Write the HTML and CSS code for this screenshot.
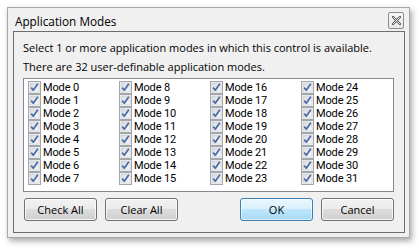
FILE: index.html
```html
<!DOCTYPE html>
<html>
<head>
<meta charset="utf-8">
<link rel="stylesheet" href="styles.css">
</head>
<body>
<svg class="defs" width="0" height="0">
  <defs>
    <linearGradient id="cbg" x1="0" y1="0" x2="1" y2="1">
      <stop offset="0" stop-color="#d6d9de"/>
      <stop offset="1" stop-color="#fbfbfb"/>
    </linearGradient>
    <symbol id="chk" viewBox="0 0 13 13">
      <rect x="0.5" y="0.5" width="12" height="12" fill="#f6f6f6" stroke="#a3a6ab"/>
      <rect x="2" y="2" width="9" height="9" fill="url(#cbg)" stroke="#c4c7cc" stroke-width="0.6"/>
      <path d="M3.2 6.6 L5.3 9.2 L9.8 2.8" fill="none" stroke="#4a6aa6" stroke-width="1.7" stroke-linejoin="round"/>
    </symbol>
  </defs>
</svg>
<div class="window">
  <div class="titlebar">
    <span class="title">Application Modes</span>
    <span class="close">
      <svg width="9" height="9" viewBox="0 0 9 9"><path d="M1 1 L8 8 M8 1 L1 8" stroke="#5a5a5a" stroke-width="2.2" stroke-linecap="square"/><path d="M1 1 L8 8 M8 1 L1 8" stroke="#fbfbfb" stroke-width="0.8"/></svg>
    </span>
  </div>
  <div class="frame">
    <p class="line">Select 1 or more application modes in which this control is available.</p>
    <p class="line">There are 32 user-definable application modes.</p>
    <div class="listbox">
      <div class="grid">
        <label class="item"><svg class="cb"><use href="#chk"/></svg><span>Mode 0</span></label>
        <label class="item"><svg class="cb"><use href="#chk"/></svg><span>Mode 1</span></label>
        <label class="item"><svg class="cb"><use href="#chk"/></svg><span>Mode 2</span></label>
        <label class="item"><svg class="cb"><use href="#chk"/></svg><span>Mode 3</span></label>
        <label class="item"><svg class="cb"><use href="#chk"/></svg><span>Mode 4</span></label>
        <label class="item"><svg class="cb"><use href="#chk"/></svg><span>Mode 5</span></label>
        <label class="item"><svg class="cb"><use href="#chk"/></svg><span>Mode 6</span></label>
        <label class="item"><svg class="cb"><use href="#chk"/></svg><span>Mode 7</span></label>
        <label class="item"><svg class="cb"><use href="#chk"/></svg><span>Mode 8</span></label>
        <label class="item"><svg class="cb"><use href="#chk"/></svg><span>Mode 9</span></label>
        <label class="item"><svg class="cb"><use href="#chk"/></svg><span>Mode 10</span></label>
        <label class="item"><svg class="cb"><use href="#chk"/></svg><span>Mode 11</span></label>
        <label class="item"><svg class="cb"><use href="#chk"/></svg><span>Mode 12</span></label>
        <label class="item"><svg class="cb"><use href="#chk"/></svg><span>Mode 13</span></label>
        <label class="item"><svg class="cb"><use href="#chk"/></svg><span>Mode 14</span></label>
        <label class="item"><svg class="cb"><use href="#chk"/></svg><span>Mode 15</span></label>
        <label class="item"><svg class="cb"><use href="#chk"/></svg><span>Mode 16</span></label>
        <label class="item"><svg class="cb"><use href="#chk"/></svg><span>Mode 17</span></label>
        <label class="item"><svg class="cb"><use href="#chk"/></svg><span>Mode 18</span></label>
        <label class="item"><svg class="cb"><use href="#chk"/></svg><span>Mode 19</span></label>
        <label class="item"><svg class="cb"><use href="#chk"/></svg><span>Mode 20</span></label>
        <label class="item"><svg class="cb"><use href="#chk"/></svg><span>Mode 21</span></label>
        <label class="item"><svg class="cb"><use href="#chk"/></svg><span>Mode 22</span></label>
        <label class="item"><svg class="cb"><use href="#chk"/></svg><span>Mode 23</span></label>
        <label class="item"><svg class="cb"><use href="#chk"/></svg><span>Mode 24</span></label>
        <label class="item"><svg class="cb"><use href="#chk"/></svg><span>Mode 25</span></label>
        <label class="item"><svg class="cb"><use href="#chk"/></svg><span>Mode 26</span></label>
        <label class="item"><svg class="cb"><use href="#chk"/></svg><span>Mode 27</span></label>
        <label class="item"><svg class="cb"><use href="#chk"/></svg><span>Mode 28</span></label>
        <label class="item"><svg class="cb"><use href="#chk"/></svg><span>Mode 29</span></label>
        <label class="item"><svg class="cb"><use href="#chk"/></svg><span>Mode 30</span></label>
        <label class="item"><svg class="cb"><use href="#chk"/></svg><span>Mode 31</span></label>
      </div>
    </div>
    <div class="buttons">
      <div class="group">
        <button class="btn">Check All</button>
        <button class="btn">Clear All</button>
      </div>
      <div class="group">
        <button class="btn btn-default">OK</button>
        <button class="btn">Cancel</button>
      </div>
    </div>
  </div>
</div>
</body>
</html>
```
FILE: styles.css
```css
html, body {
  margin: 0;
  padding: 0;
  background: #ffffff;
}
body {
  width: 419px;
  height: 248px;
  overflow: hidden;
  font-family: "Open Sans", "Noto Sans", sans-serif;
  font-size: 11px;
  color: #000;
}
.defs {
  position: absolute;
  width: 0;
  height: 0;
}
.window {
  margin: 7px 0 0 7px;
  border: 1px solid #a8a8a8;
  background: #f0f0f0;
  box-shadow: 2px 3px 6px rgba(0, 0, 0, 0.35);
  display: flex;
  flex-direction: column;
  padding: 0 4px 4px 5px;
  box-sizing: content-box;
  width: 392px;
  height: 225px;
}
.titlebar {
  height: 23px;
  display: flex;
  align-items: flex-start;
  justify-content: space-between;
}
.title {
  font-size: 11.75px;
  line-height: 16px;
  padding: 5px 0 0 2px;
}
.close {
  margin-top: 4px;
  margin-right: 1px;
  width: 14px;
  height: 15px;
  border: 1px solid #8d8d8d;
  border-radius: 2px;
  background: linear-gradient(#f8f8f8, #e6e6e6);
  display: flex;
  align-items: center;
  justify-content: center;
}
.frame {
  flex: 1;
  border: 1px solid #6c6c6c;
  padding: 8px 10px 9px 9px;
  display: flex;
  flex-direction: column;
}
.line {
  margin: 0 0 4px 0;
  line-height: 15px;
  white-space: nowrap;
}
.listbox {
  border: 1px solid #828790;
  background: #ffffff;
  padding: 2px 0 0 4px;
  box-sizing: content-box;
  height: 110px;
}
.grid {
  display: grid;
  grid-auto-flow: column;
  grid-template-rows: repeat(8, 13px);
  grid-template-columns: repeat(4, 91px);
}
.item {
  display: flex;
  align-items: center;
  gap: 1px;
  height: 13px;
  font-family: Roboto, "Open Sans", sans-serif;
  font-size: 11px;
  letter-spacing: -0.15px;
  line-height: 13px;
  white-space: nowrap;
}
.item span {
  padding-left: 1px;
}
.cb {
  width: 13px;
  height: 13px;
  flex: none;
}
.buttons {
  margin-top: 6px;
  padding-left: 1px;
  display: flex;
  justify-content: space-between;
}
.group {
  display: flex;
  gap: 8px;
}
.btn {
  width: 73px;
  height: 23px;
  margin: 0;
  padding: 0;
  font: inherit;
  color: #000;
  border: 1px solid #707070;
  border-radius: 3px;
  background: linear-gradient(#f2f2f2 0%, #ebebeb 50%, #dddddd 50%, #cfcfcf 100%);
  box-shadow: inset 0 0 0 1px rgba(255, 255, 255, 0.8);
}
.btn-default {
  border-color: #3c7fb1;
  background: linear-gradient(#eaf6fd 0%, #d9f0fc 50%, #bee6fd 50%, #a7d9f5 100%);
  box-shadow: inset 0 0 0 1px rgba(255, 255, 255, 0.6);
}
```
